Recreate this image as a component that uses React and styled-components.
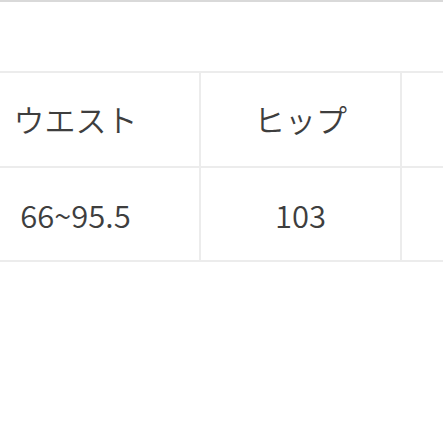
import React from "react";
import styled, { createGlobalStyle } from "styled-components";

const Global = createGlobalStyle`
  html, body { margin: 0; padding: 0; background: #fff; overflow: hidden; }
  body { font-family: "Noto Sans CJK JP", "Noto Sans", sans-serif; }
`;

const Page = styled.div`
  width: 443px;
  height: 443px;
  overflow: hidden;
  border-top: 2px solid #d9d9d9;
  box-sizing: border-box;
  padding-top: 69px;
`;

const Grid = styled.div`
  display: grid;
  grid-template-columns: 251px 201px 201px;
  grid-template-rows: 95px 94px;
  margin-left: -50px;
  width: 653px;
  border-top: 2px solid #ececec;
`;

const Cell = styled.div`
  box-sizing: border-box;
  display: flex;
  align-items: center;
  justify-content: center;
  border-right: 2px solid #ececec;
  border-bottom: 2px solid #ececec;
  font-size: 31px;
  font-weight: 350;
  color: #3e3e3e;
  font-family: "Noto Sans CJK JP", "Noto Sans", sans-serif;
  padding-bottom: ${(p) => (p.$head ? "3px" : "0")};
  padding-left: ${(p) => (p.$first ? "2px" : "0")};
`;

export default function App() {
  return (
    <>
      <Global />
      <Page>
        <Grid>
          <Cell $head $first>ウエスト</Cell>
          <Cell $head>ヒップ</Cell>
          <Cell $head></Cell>
          <Cell $first>66~95.5</Cell>
          <Cell>103</Cell>
          <Cell></Cell>
        </Grid>
      </Page>
    </>
  );
}
